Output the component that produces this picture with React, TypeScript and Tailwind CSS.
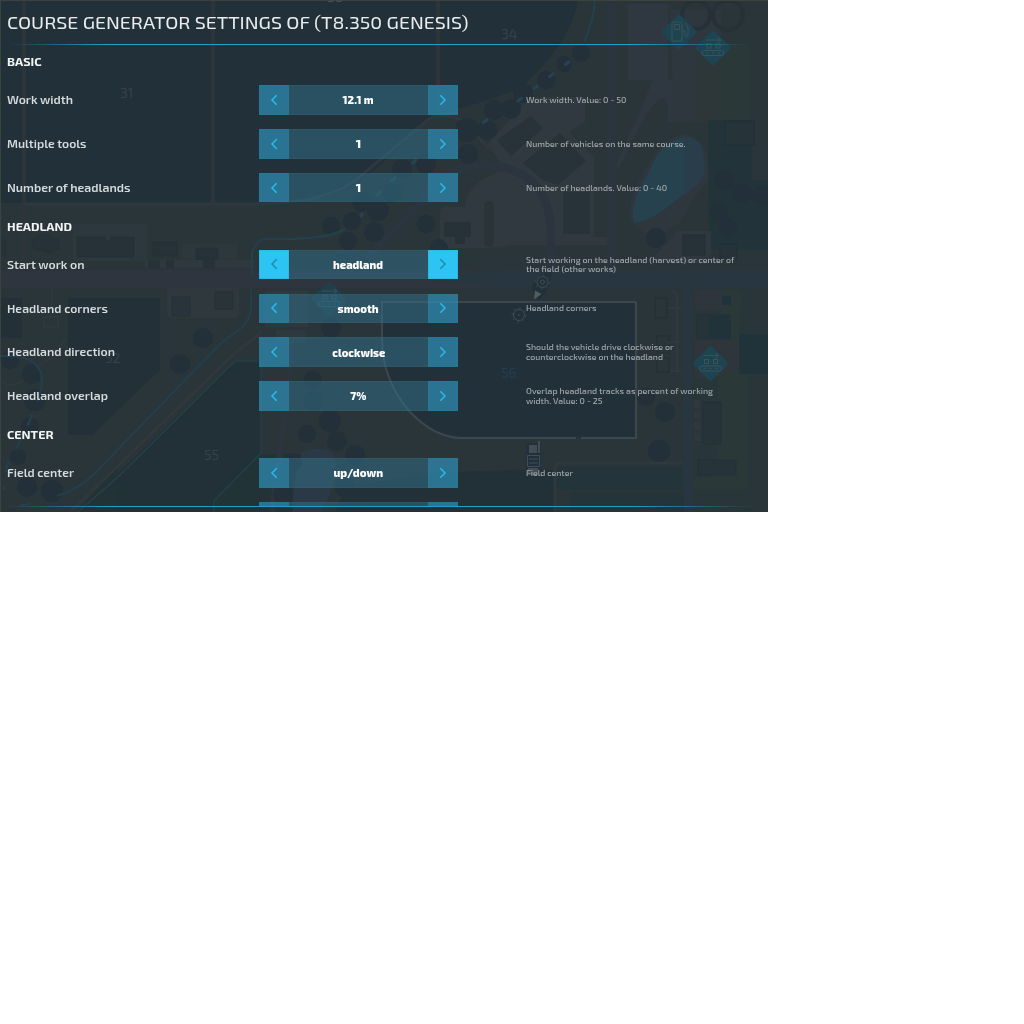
import { useLayoutEffect, useRef, useState } from "react";

type FitProps = { text: string; width: number; className?: string; origin?: "left" | "center" };

/* Stretches a single line of text to a fixed optical width. */
function Fit({ text, width, className = "", origin = "left" }: FitProps) {
  const ref = useRef<HTMLSpanElement>(null);
  const [scale, setScale] = useState(1);
  useLayoutEffect(() => {
    if (ref.current && ref.current.offsetWidth) {
      const prev = ref.current.style.transform;
      ref.current.style.transform = "none";
      setScale(width / ref.current.getBoundingClientRect().width);
      ref.current.style.transform = prev;
    }
  }, [text, width]);
  return (
    <span
      ref={ref}
      className={`inline-block whitespace-pre ${origin === "left" ? "origin-left" : "origin-center"} ${className}`}
      style={{ transform: `scaleX(${scale})` }}
    >
      {text}
    </span>
  );
}

type Row = {
  label: string;
  lw: number;
  value: string;
  vw: number;
  help: [string, number][];
  focused?: boolean;
};

const sections: { title: string; tw: number; rows: Row[] }[] = [
  {
    title: "BASIC",
    tw: 34.5,
    rows: [
      { label: "Work width", lw: 66, value: "12.1 m", vw: 31, help: [["Work width. Value: 0 - 50", 100.5]] },
      { label: "Multiple tools", lw: 79.5, value: "1", vw: 5.5, help: [["Number of vehicles on the same course.", 159.5]] },
      { label: "Number of headlands", lw: 123.5, value: "1", vw: 5.5, help: [["Number of headlands. Value: 0 - 40", 141]] },
    ],
  },
  {
    title: "HEADLAND",
    tw: 65,
    rows: [
      {
        label: "Start work on", lw: 77.5, value: "headland", vw: 50, focused: true,
        help: [["Start working on the headland (harvest) or center of", 208.5], ["the field (other works)", 90]],
      },
      { label: "Headland corners", lw: 101, value: "smooth", vw: 41, help: [["Headland corners", 70.5]] },
      {
        label: "Headland direction", lw: 108, value: "clockwise", vw: 53,
        help: [["Should the vehicle drive clockwise or", 147.5], ["counterclockwise on the headland", 137]],
      },
      {
        label: "Headland overlap", lw: 101, value: "7%", vw: 16,
        help: [["Overlap headland tracks as percent of working", 187], ["width. Value: 0 - 25", 76.5]],
      },
    ],
  },
  {
    title: "CENTER",
    tw: 46.5,
    rows: [{ label: "Field center", lw: 67, value: "up/down", vw: 49.5, help: [["Field center", 47]] }],
  },
];

function Arrow({ dir, focused }: { dir: "left" | "right"; focused?: boolean }) {
  return (
    <button
      className={`flex h-full w-[30px] shrink-0 items-center justify-center border ${
        focused ? "border-[#2bb9e6] bg-[#2bc4f3]" : "border-[#2f86a6]/20 bg-[#2d90b8]/70"
      }`}
    >
      <svg width="8" height="12" viewBox="0 0 8 12" fill="none" stroke={focused ? "#218cae" : "#2bb8e8"} strokeWidth="1.6">
        <path d={dir === "left" ? "M6.700 1.200 2 6l4.700 4.800" : "M1.300 1.200 6 6 1.300 10.800"} />
      </svg>
    </button>
  );
}

function Selector({ value, vw, focused }: { value?: string; vw?: number; focused?: boolean }) {
  return (
    <div className="flex h-[29.500px] w-[199px] shrink-0">
      <Arrow dir="left" focused={focused} />
      <div className="flex flex-1 items-center justify-center border-y border-[#2f6f80]/20 bg-[#32718c]/50 text-[11.500px] font-extrabold text-white">
        {value && <Fit text={value} width={vw ?? 10} origin="center" />}
      </div>
      <Arrow dir="right" focused={focused} />
    </div>
  );
}

function Setting({ row }: { row: Row }) {
  return (
    <div className="flex h-[43.900px] items-center">
      <div className="w-[252px] shrink-0 pb-[1.500px] text-[12px] font-semibold text-[#d6dbdd]">
        <Fit text={row.label} width={row.lw} />
      </div>
      <Selector value={row.value} vw={row.vw} focused={row.focused} />
      <div className="ml-[68px] flex flex-col pt-px text-[8.500px] leading-[9.300px] font-medium text-[#a5acaf]">
        {row.help.map(([t, w]) => (
          <div key={t} className="h-[9.300px]"><Fit text={t} width={w} className="align-top" /></div>
        ))}
      </div>
    </div>
  );
}

function Marker({ x, y, kind, fill = "#1e4451" }: { x: number; y: number; kind: "fuel" | "belt"; fill?: string }) {
  return (
    <g transform={`translate(${x} ${y})`}>
      <rect x="-13" y="-13" width="26" height="26" rx="2.500" transform="rotate(45)" fill={fill} />
      {kind === "fuel" ? (
        <g fill="none" stroke="#3a535a" strokeWidth="1">
          <path d="M-7 9V-8.500q0-1.500 1.500-1.500h7q1.500 0 1.500 1.500V9zM-4.500-7.500h5v5h-5zM3-1h3v5q2 3 3-1v-8L6-9" />
        </g>
      ) : (
        <g fill="none" stroke="#3a535a" strokeWidth="1">
          <path d="M-7-8H8M5-10.500l3 2.500-3 2.500" />
          <rect x="-6" y="-4" width="4" height="4" />
          <rect x="3" y="-4" width="4" height="4" />
          <rect x="-11" y="2.500" width="22" height="5" rx="2.500" />
          <path d="M-7 5h2M-1 5h2M5 5h2" />
        </g>
      )}
    </g>
  );
}

const trees: [number, number, number][] = [
  [581, 53, 9], [564, 64, 8], [546, 80, 9], [523, 93, 10], [511, 109, 10], [494, 110, 10], [487, 130, 10], [467, 130, 12],
  [468, 154, 10], [426, 164, 10], [402, 169, 10], [392, 193, 10], [362, 202, 10], [378, 210, 11], [352, 221, 9], [331, 226, 9],
  [374, 232, 10], [348, 241, 9], [426, 224, 9], [439, 248, 9], [656, 238, 10], [203, 338, 10], [180, 364, 10],
  [331, 328, 10], [313, 380, 9], [313, 401, 10], [330, 421, 11], [307, 434, 9], [337, 441, 10], [355, 455, 10], [293, 462, 9],
  [345, 488, 10], [665, 412, 10], [659, 451, 11], [646, 397, 9], [283, 495, 10], [10, 360, 9], [32, 374, 10], [35, 400, 11],
  [30, 426, 9], [18, 457, 8], [27, 487, 10], [52, 491, 11], [725, 180, 10], [742, 193, 10], [719, 212, 9], [728, 227, 9], [762, 196, 10],
];

function FieldMap() {
  return (
    <svg className="absolute inset-0 h-full w-full" viewBox="0 0 768 512" fill="none">
      <defs>
        <filter id="soft" x="0" y="0" width="1" height="1" colorInterpolationFilters="sRGB"><feGaussianBlur stdDeviation="0.500" /></filter>
      </defs>
      <rect width="768" height="512" fill="#293538" />
      <g filter="url(#soft)">
        <rect width="768" height="512" fill="#293538" />
        <path d="M0 0H578Q570 45 520 88Q480 105 432 115Q390 160 350 188Q320 202 270 203H0z" fill="#223039" />
        <path d="M382 302H636V438H462Q428 434 410 412Q382 380 382 338z" fill="#223039" />
        <path d="M68 298H160V370L92 435H68zM0 298H22V338H0z" fill="#233038" />
        <path d="M235 361H261V453L214 503V512H78z" fill="#223038" />
        <path d="M118 462V512H78zM214 502l47-48h50v58h-97z" fill="#223338" />
        <path d="M345 490Q420 468 555 470V512H335z" fill="#223038" />
        <path d="M570 492h115v20H570zM555 467h127v23H555z" fill="#23343a" />
        <path d="M24 0V264M213 0V202M438 0V112" stroke="#2d353b" strokeWidth="4" />
        <path d="M24 204H255Q330 204 362 175L430 118Q448 112 465 122L488 148L530 100" stroke="#2f383e" strokeWidth="3" />
        <path d="M628 4h40v118h7V92q-18 0-36 36T618 170l-2-6Q632 130 653 80h-25z" fill="#2f3740" />
        <path d="M674 122h-3q-2-30-14-22q-20 22-29 52q10-40 25-72h23z" fill="#2f3740" />
        <path d="M670 10h51v112h-47z" fill="#2f373e" />
        <path d="M695 50h27v72h-27z" fill="#2d3639" />
        <path d="M721 45h29v77h-29z" fill="#2a3838" />
        <path d="M708 120h44v60h16v70H709z" fill="#22343a" />
        <rect x="725" y="121" width="29" height="24" fill="#26343a" stroke="#233039" strokeWidth="2" />
        <path d="M530 97h55v25l-16 10 25 25v80h18v8H512Q490 250 440 248V212q0-5 5-5h20q0-20 26-32l14-8-18-22z" fill="#2f393f" />
        <path d="m497 140 34-24 12 12-32 28zM523 163l37-30 26 28-28 24-15-5zM563 192h27v42h-27z" fill="#273338" />
        <rect x="484" y="201" width="10" height="46" rx="5" fill="#293438" />
        <path d="M444 222h27v15h-6v7h-10v-7h-11z" fill="#263238" />
        <path d="M631 222Q624 205 647 166Q665 134 685 134Q712 138 708 180Q694 197 680 222Q658 240 643 232z" fill="#2e363e" />
        <path d="M634 222Q628 205 650 170Q662 138 688 137Q706 140 705 173Q702 183 681 196Q650 224 634 222z" fill="#27424f" />
        <path d="M684 138Q706 140 705 173Q700 185 684 195z" fill="#293d4b" />
        <path d="m655 256 22-25h34v32h-56z" fill="#2f373f" />
        <path d="M683 235h22v20h-22zM720 244h17v16h-17z" fill="#273238" stroke="#222f38" />
        <path d="M73 224h74v37H73zM182 244h55v15h-55z" fill="#2d383e" />
        <path d="M77 237h28v4h6v-4h23v20H77zM33 238l10-4 16 6v9l-10 4-16-5zM153 242h24v14h-24zM196 248h22v11h-22zM0 240h6v16H0z" fill="#263238" stroke="#232f37" strokeWidth=".700" />
        <path d="M145 260h110v8H145z" fill="#2e383e" />
        <path d="M148 260h12v8h-12zM166 260h8v8h-8zM203 260h12v8h-12z" fill="#263238" />
        <path d="M0 272H768" stroke="#2c353b" strokeWidth="5" />
        <path d="M0 271H425L490 270V288H0z" fill="#2f353f" />
        <path d="M425 280Q455 271 500 270H768V287H490z" fill="#283640" />
        <path d="M367 258L425 198Q450 163 489 165Q548 170 551 230V275M611 0V272" stroke="#2a3540" strokeWidth="8" />
        <path d="M688 286V512" stroke="#283641" strokeWidth="8" />
        <path d="M290 288V375L272 512" stroke="#2c343e" strokeWidth="6" />
        <path d="M167 288h72v25q0 5-5 5h-62q-5 0-5-5z" fill="#2e383d" />
        <path d="M172 297h18v19h-18zM215 292h18v17h-18z" fill="#28343a" stroke="#253139" />
        <path d="M265 291h43v36h-43zM276 330h30v13h-30z" fill="#2d393f" />
        <path d="M52 289v25M44 317h14v10H44zM65 338q-6 18-28 28" stroke="#2d383d" strokeWidth="2.500" />
        <path d="M0 380Q10 390 23 380" stroke="#2e393f" strokeWidth="2" />
        <path d="M696 288h61v224h-61z" fill="#28363a" />
        <path d="M694 290h47v20h-45zM694 338h46v40h-46z" fill="#2e363c" />
        <path d="M722 290h18v52h-18zM718 370h30v119h-55v-10l25-5z" fill="#2a3838" />
        <path d="M697 315h33v24h-33zM703 402h18v42h-18zM698 460h38v15h-38z" fill="#263338" stroke="#223039" />
        <path d="M709 316h22v22h-22zM722 296h9v9h-9zM739 334h29v40h-29z" fill="#21333a" />
        <path d="M655 298h12v20h-12zM657 336h12v17h-12zM657 358h12v14h-12z" stroke="#233039" strokeWidth="1.500" />
        <path d="M671 289l6 6v78M669 308h12M667 343l14-2M670 371h11" stroke="#2f393f" strokeWidth="2" />
        <path d="M697 400v45" stroke="#30373e" strokeWidth="6" strokeDasharray="8 3" />
        <path d="M555 512V468q0-5 5-5H682" stroke="#2f383f" strokeWidth="3" />
        <path d="M302 452Q312 447 326 449Q339 453 335 477Q330 500 320 512H292Q294 470 302 452z" fill="#2a3945" />
        {trees.map(([x, y, r]) => <circle key={`${x}-${y}`} cx={x} cy={y} r={r} fill="#233039" />)}
        <circle cx="696" cy="15" r="14" stroke="#263137" strokeWidth="4" />
        <circle cx="728" cy="15" r="15" stroke="#263137" strokeWidth="4" />
        <path d="M252 275V252Q257 240 264 239Q330 240 345 229M595 0Q594 20 584 42" stroke="#24404c" strokeWidth="2.200" />
        <path d="M570 61L510 107M488 119L476 128M417 159L411 165M396 177L375 197M363 213l-3 4" stroke="#254452" strokeWidth="3" strokeDasharray="7 13" />
        <path d="M251 289V309Q250 320 241 328L220 344L95 473Q78 490 57 496M0 356Q30 355 38 367Q44 375 41 390" stroke="#253e4b" strokeWidth="2.200" />
        <path d="M41 390Q32 420 15 450Q0 475 5 490M20 506l20-5" stroke="#253e4b" strokeWidth="2.500" strokeDasharray="12 14" />
        <path d="M262 332L236 352L70 512" stroke="#30383e" strokeWidth="3" />
        <path d="M258 361H235L120 475L78 512M261 361V453L214 501V512" stroke="#25434b" strokeWidth="1.100" />
        <path d="M636 302H382V338Q382 380 410 412Q435 438 462 438H576M581 438H636V302" stroke="#3d474d" strokeWidth="2" />
      </g>
      <path d="M0 .5H768M.5 0V512" stroke="#3c4240" />
      <Marker x={679} y={32} kind="fuel" />
      <Marker x={713} y={48} kind="belt" />
      <Marker x={710.5} y={363.500} kind="belt" />
      <Marker x={329} y={299} kind="belt" fill="#213f4a" />
      <path d="m532 285 10-12 10-1-4 17-9 11-5-4z" fill="#213039" />
      <g stroke="#434e54" strokeWidth="1">
        <circle cx="542.500" cy="282" r="5.500" />
        <circle cx="542.500" cy="282" r="7" strokeDasharray="1.500 4" />
        <circle cx="542.500" cy="282" r="2" />
        <circle cx="519" cy="315" r="5.500" />
        <circle cx="519" cy="315" r="7" strokeDasharray="1.500 4" />
      </g>
      <circle cx="519" cy="315" r=".8" fill="#465157" />
      <path d="M535 290.500 541.500 294 534 299.500z" fill="#535c5f" />
      <path d="M526 443h15v26h-15z" fill="#21303b" />
      <path d="M529 445h8v8h-8zM538 441h2v12h-2zM528 468h10v7h-10z" fill="#434e54" />
      <path d="M527.500 455.500h12v11h-12zM529 459h9M529 463h9" stroke="#434e54" />
    </svg>
  );
}

function MapLabel({ text, className }: { text: string; className: string }) {
  return <span className={`absolute text-[14px] leading-[14px] ${className}`}>{text}</span>;
}

const rule =
  "h-px shrink-0 bg-[linear-gradient(to_right,transparent_0%,transparent_1%,#1fa0cc_14%,#1fa0cc_82%,transparent_98%)]";

export default function App() {
  return (
    <main className="relative h-[512px] w-[768px] overflow-hidden bg-[#293538] font-['Exo_2','Inter',sans-serif]">
      <div className="absolute inset-0">
        <FieldMap />
        <MapLabel text="31" className="left-[120px] top-[86px] text-[#364148]" />
        <MapLabel text="34" className="left-[501px] top-[27px] text-[#364148]" />
        <MapLabel text="36" className="left-[327px] top-[-10px] text-[#485156]" />
        <MapLabel text="52" className="left-[105px] top-[351px] text-[#364148]" />
        <MapLabel text="55" className="left-[204px] top-[448px] text-[#364148]" />
        <MapLabel text="56" className="left-[501px] top-[366px] text-[#243f51]" />
      </div>
      <div className="relative flex h-full flex-col">
        <header className="flex h-[44px] shrink-0 items-center pl-[7px] pt-px text-[18.500px] text-[#e9edee]">
          <Fit text="COURSE GENERATOR SETTINGS OF (T8.350 GENESIS)" width={461.500} />
        </header>
        <div className={rule} />
        <div className="flex h-[461px] shrink-0 flex-col overflow-hidden pl-[7px] pt-[0.200px]">
          {sections.map((s) => (
            <section key={s.title} className="shrink-0">
              <h2 className="flex h-[32.800px] items-center pb-px text-[12px] font-bold text-[#f2f4f4]">
                <Fit text={s.title} width={s.tw} />
              </h2>
              {s.rows.map((r) => <Setting key={r.label} row={r} />)}
            </section>
          ))}
          <div className="flex h-[43.900px] shrink-0 items-center pl-[252px]"><Selector /></div>
        </div>
        <div className={rule} />
      </div>
    </main>
  );
}
